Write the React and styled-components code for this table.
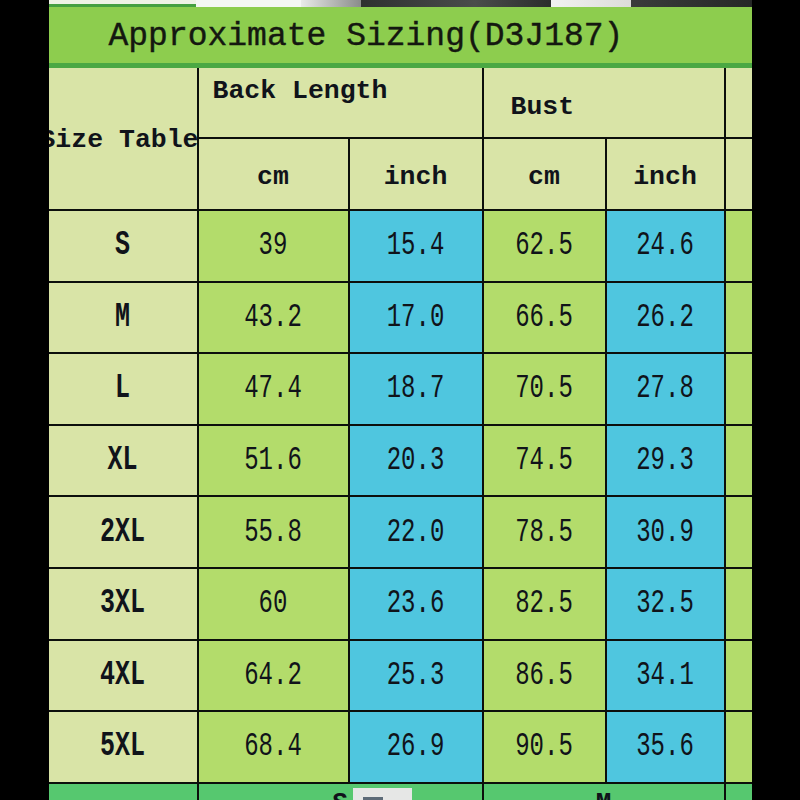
import React from 'react'
import styled, { createGlobalStyle } from 'styled-components'

const GlobalStyle = createGlobalStyle`
html, body {
    margin: 0;
    padding: 0;
    background: #000;
    overflow: hidden;
    height: 800px;
}
`

const rows = [
    ['S', '39', '15.4', '62.5', '24.6'],
    ['M', '43.2', '17.0', '66.5', '26.2'],
    ['L', '47.4', '18.7', '70.5', '27.8'],
    ['XL', '51.6', '20.3', '74.5', '29.3'],
    ['2XL', '55.8', '22.0', '78.5', '30.9'],
    ['3XL', '60', '23.6', '82.5', '32.5'],
    ['4XL', '64.2', '25.3', '86.5', '34.1'],
    ['5XL', '68.4', '26.9', '90.5', '35.6'],
]

// top sliver of the photo above the chart
const strip = [
    { w: 147, c: 'linear-gradient(#eef3e6 0 55%, #45a042 55%)' },
    { w: 105, c: '#f5f7f4' },
    { w: 60, c: 'linear-gradient(90deg, #e9ebe8, #8a8c8a)' },
    { w: 190, c: 'linear-gradient(90deg, #2e3030, #4a4c4b 60%, #2b2d2c)' },
    { w: 80, c: 'linear-gradient(90deg, #f2f2f0, #dcdcda)' },
    { w: 121, c: 'linear-gradient(90deg, #3a3c3b, #262827)' },
]

const App = () => {
    return (
        <>
            <GlobalStyle />
            <Page>
                <Edge />
                <Sheet>
                    <Strip>
                        {strip.map((s, i) => (
                            <Segment key={i} $w={s.w} $bg={s.c} />
                        ))}
                    </Strip>
                    <Title>Approximate Sizing(D3J187)</Title>
                    <Table>
                        <SizeHead><span>Size Table</span></SizeHead>
                        <GroupHead $span={2} $left={14} $top={8}>Back Length</GroupHead>
                        <GroupHead $span={2} $left={27} $top={24}>Bust</GroupHead>
                        <Cell $tone="pale" />
                        <UnitHead>cm</UnitHead>
                        <UnitHead>inch</UnitHead>
                        <UnitHead>cm</UnitHead>
                        <UnitHead>inch</UnitHead>
                        <Cell $tone="pale" />
                        {rows.map(r => (
                            <React.Fragment key={r[0]}>
                                <Cell $tone="pale"><Tall $bold>{r[0]}</Tall></Cell>
                                <Cell $tone="green"><Tall>{r[1]}</Tall></Cell>
                                <Cell $tone="cyan"><Tall>{r[2]}</Tall></Cell>
                                <Cell $tone="green"><Tall>{r[3]}</Tall></Cell>
                                <Cell $tone="cyan"><Tall>{r[4]}</Tall></Cell>
                                <Cell $tone="green" />
                            </React.Fragment>
                        ))}
                        <FootCell />
                        <FootCell $span={2}>
                            <FootLetter>S</FootLetter>
                            <Sticker><StickerMark /></Sticker>
                        </FootCell>
                        <FootCell $span={2}><FootLetter>M</FootLetter></FootCell>
                        <FootCell />
                    </Table>
                </Sheet>
                <Edge />
            </Page>
        </>
    )
}

const tones = {
    pale: '#d9e4a7',
    green: '#b3dc6b',
    cyan: '#4fc6df',
}

const Page = styled.div`
display:flex;
width:800px;
height:800px;
overflow:hidden;
background:#000;
`
const Edge = styled.div`
flex:1;
background:#000;
position:relative;
z-index:2;
`
const Sheet = styled.div`
width:703px;
flex-shrink:0;
display:flex;
flex-direction:column;
& > * {
    flex-shrink:0;
}
`
const Strip = styled.div`
display:flex;
height:7px;
`
const Segment = styled.div`
width:${p => p.$w}px;
background:${p => p.$bg};
`
const Title = styled.div`
height:61px;
box-sizing:border-box;
padding:2px 0 0 60px;
display:flex;
align-items:center;
background:#8dcd4e;
border-bottom:5px solid #4aa843;
color:#141810;
font-family:"Liberation Mono", "DejaVu Sans Mono", monospace;
font-size:33px;
-webkit-text-stroke:0.4px #141810;
`
const Table = styled.div`
display:grid;
grid-template-columns:148px 149px 132px 121px 117px 26px;
grid-template-rows:69px 70px repeat(8, 69.6px) 40px;
gap:2px;
background:#0c0f0c;
font-family:"Liberation Mono", "DejaVu Sans Mono", monospace;
color:#10131a;
`
const Cell = styled.div`
background:${p => tones[p.$tone]};
display:flex;
align-items:center;
justify-content:center;
overflow:hidden;
`
const SizeHead = styled.div`
grid-row:span 2;
background:${tones.pale};
display:flex;
align-items:center;
justify-content:flex-end;
white-space:nowrap;
font-weight:bold;
font-size:26.5px;
padding-top:3px;
position:relative;
z-index:1;
span {
    margin-right:-2px;
}
`
const GroupHead = styled.div`
grid-column:span ${p => p.$span};
background:${tones.pale};
padding:${p => p.$top}px 0 0 ${p => p.$left}px;
font-weight:bold;
font-size:26.5px;
line-height:30px;
`
const UnitHead = styled.div`
background:${tones.pale};
display:flex;
align-items:center;
justify-content:center;
padding-top:6px;
font-weight:bold;
font-size:26.5px;
`
const Tall = styled.span`
display:inline-block;
transform:scaleY(1.38);
font-size:${p => (p.$bold ? '25px' : '24px')};
font-weight:${p => (p.$bold ? 'bold' : 'normal')};
`
const FootCell = styled.div`
grid-column:span ${p => p.$span || 1};
background:#56c86f;
display:flex;
justify-content:center;
position:relative;
`
const FootLetter = styled.span`
padding-top:6px;
font-size:26px;
line-height:26px;
font-weight:bold;
`
const Sticker = styled.div`
position:absolute;
left:154px;
top:4px;
width:59px;
height:20px;
background:#e6e7e6;
`
const StickerMark = styled.div`
margin:9px 0 0 10px;
width:20px;
height:8px;
background:#5d6b78;
`

export default App
